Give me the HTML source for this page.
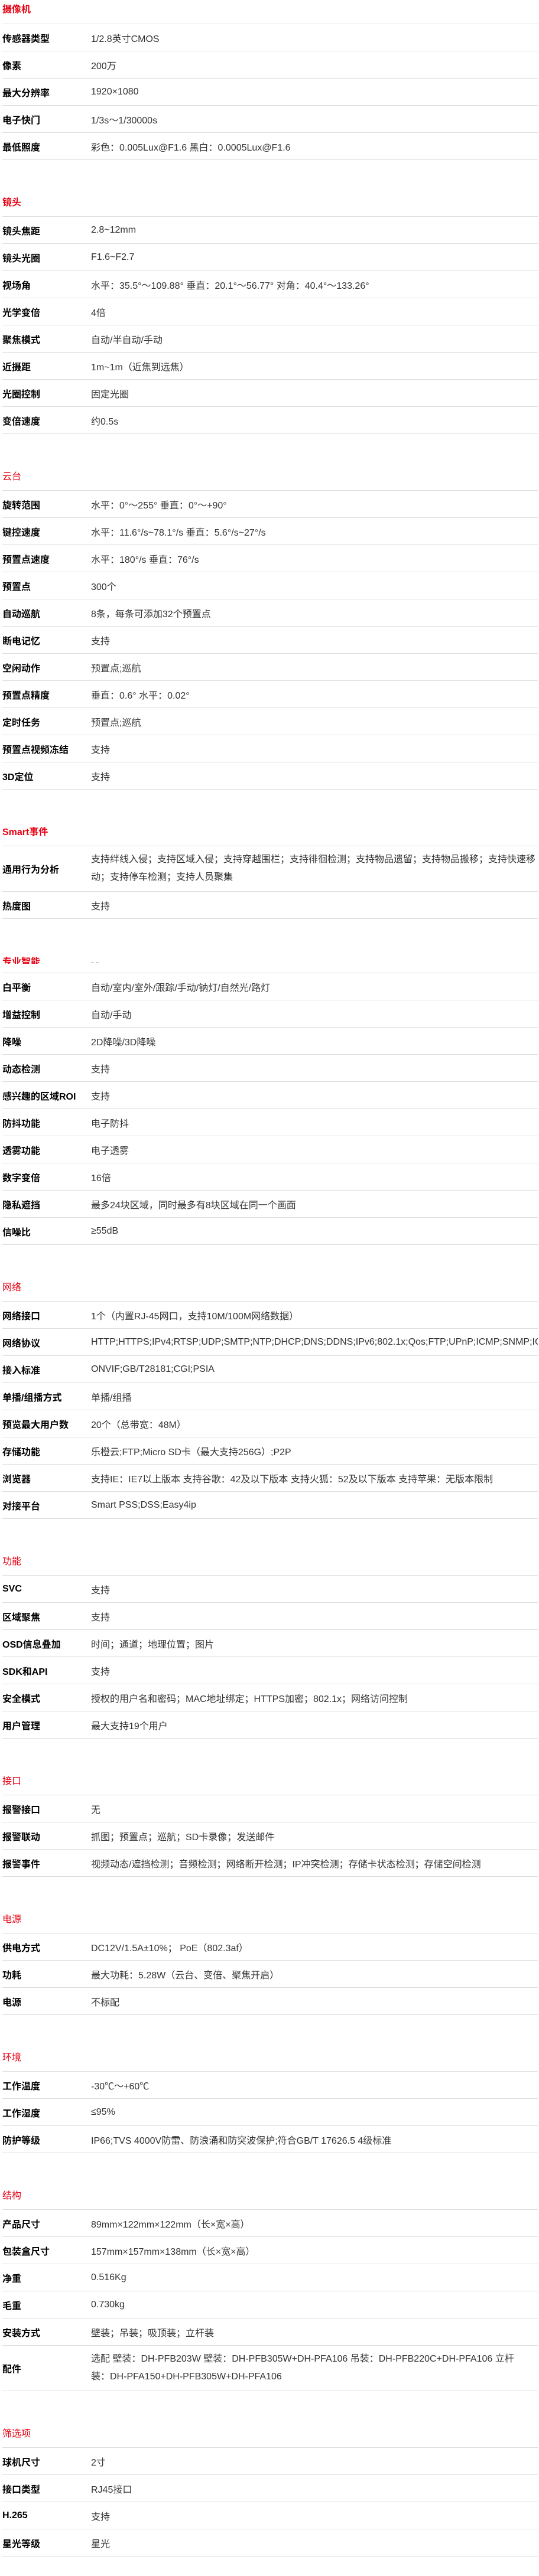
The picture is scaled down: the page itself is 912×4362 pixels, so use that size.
<!DOCTYPE html>
<html><head><meta charset="utf-8">
<style>
body{margin:0;width:912px;height:4362px;overflow:hidden;background:#fff;font-family:"Liberation Sans","Noto Sans CJK SC",sans-serif;font-size:16px}
.sec{margin:55px 2px 0 4px;overflow:hidden}
.h{height:40px;box-sizing:border-box;padding-top:8px;line-height:20px;color:#e60012}
.hb{font-weight:bold}
.r{border-top:1px solid #ddd;height:45px;display:flex;align-items:center;white-space:nowrap}
.r b{width:150px;flex:none;color:#000}
.r span{color:#333}
.r.t{height:76px}
.r.t span{white-space:normal;line-height:30px}
.end{border-top:1px solid #ddd}
</style></head><body>

<div class="sec" style="margin-top:0"><div class="h hb" style="padding-top:7px">摄像机</div>
<div class="r"><b>传感器类型</b><span>1/2.8英寸CMOS</span></div>
<div class="r"><b>像素</b><span>200万</span></div>
<div class="r"><b>最大分辨率</b><span>1920×1080</span></div>
<div class="r"><b>电子快门</b><span>1/3s～1/30000s</span></div>
<div class="r"><b>最低照度</b><span>彩色：0.005Lux@F1.6 黑白：0.0005Lux@F1.6</span></div>
<div class="end"></div></div>

<div class="sec"><div class="h hb">镜头</div>
<div class="r"><b>镜头焦距</b><span>2.8~12mm</span></div>
<div class="r"><b>镜头光圈</b><span>F1.6~F2.7</span></div>
<div class="r"><b>视场角</b><span>水平：35.5°～109.88° 垂直：20.1°～56.77° 对角：40.4°～133.26°</span></div>
<div class="r"><b>光学变倍</b><span>4倍</span></div>
<div class="r"><b>聚焦模式</b><span>自动/半自动/手动</span></div>
<div class="r"><b>近摄距</b><span>1m~1m（近焦到远焦）</span></div>
<div class="r"><b>光圈控制</b><span>固定光圈</span></div>
<div class="r"><b>变倍速度</b><span>约0.5s</span></div>
<div class="end"></div></div>

<div class="sec"><div class="h">云台</div>
<div class="r"><b>旋转范围</b><span>水平：0°～255° 垂直：0°～+90°</span></div>
<div class="r"><b>键控速度</b><span>水平：11.6°/s~78.1°/s 垂直：5.6°/s~27°/s</span></div>
<div class="r"><b>预置点速度</b><span>水平：180°/s 垂直：76°/s</span></div>
<div class="r"><b>预置点</b><span>300个</span></div>
<div class="r"><b>自动巡航</b><span>8条，每条可添加32个预置点</span></div>
<div class="r"><b>断电记忆</b><span>支持</span></div>
<div class="r"><b>空闲动作</b><span>预置点;巡航</span></div>
<div class="r"><b>预置点精度</b><span>垂直：0.6° 水平：0.02°</span></div>
<div class="r"><b>定时任务</b><span>预置点;巡航</span></div>
<div class="r"><b>预置点视频冻结</b><span>支持</span></div>
<div class="r"><b>3D定位</b><span>支持</span></div>
<div class="end"></div></div>

<div class="sec"><div class="h hb">Smart事件</div>
<div class="r t"><b>通用行为分析</b><span>支持绊线入侵；支持区域入侵；支持穿越围栏；支持徘徊检测；支持物品遗留；支持物品搬移；支持快速移<br>动；支持停车检测；支持人员聚集</span></div>
<div class="r"><b>热度图</b><span>支持</span></div>
<div class="end"></div></div>

<div class="sec" style="margin-top:51px"><div class="h hb" style="position:relative;padding-top:0"><div style="position:absolute;left:0;top:13px;height:12px;overflow:hidden;line-height:20px">专业智能</div><div style="position:absolute;left:150px;top:19px;font-size:9px;color:#666;line-height:8px;font-weight:normal">~ ~</div></div>
<div class="r"><b>白平衡</b><span>自动/室内/室外/跟踪/手动/钠灯/自然光/路灯</span></div>
<div class="r"><b>增益控制</b><span>自动/手动</span></div>
<div class="r"><b>降噪</b><span>2D降噪/3D降噪</span></div>
<div class="r"><b>动态检测</b><span>支持</span></div>
<div class="r"><b>感兴趣的区域ROI</b><span>支持</span></div>
<div class="r"><b>防抖功能</b><span>电子防抖</span></div>
<div class="r"><b>透雾功能</b><span>电子透雾</span></div>
<div class="r"><b>数字变倍</b><span>16倍</span></div>
<div class="r"><b>隐私遮挡</b><span>最多24块区域，同时最多有8块区域在同一个画面</span></div>
<div class="r"><b>信噪比</b><span>≥55dB</span></div>
<div class="end"></div></div>

<div class="sec"><div class="h">网络</div>
<div class="r"><b>网络接口</b><span>1个（内置RJ-45网口，支持10M/100M网络数据）</span></div>
<div class="r"><b>网络协议</b><span>HTTP;HTTPS;IPv4;RTSP;UDP;SMTP;NTP;DHCP;DNS;DDNS;IPv6;802.1x;Qos;FTP;UPnP;ICMP;SNMP;IGMP</span></div>
<div class="r"><b>接入标准</b><span>ONVIF;GB/T28181;CGI;PSIA</span></div>
<div class="r"><b>单播/组播方式</b><span>单播/组播</span></div>
<div class="r"><b>预览最大用户数</b><span>20个（总带宽：48M）</span></div>
<div class="r"><b>存储功能</b><span>乐橙云;FTP;Micro SD卡（最大支持256G）;P2P</span></div>
<div class="r"><b>浏览器</b><span>支持IE：IE7以上版本 支持谷歌：42及以下版本 支持火狐：52及以下版本 支持苹果：无版本限制</span></div>
<div class="r"><b>对接平台</b><span>Smart PSS;DSS;Easy4ip</span></div>
<div class="end"></div></div>

<div class="sec"><div class="h">功能</div>
<div class="r"><b>SVC</b><span>支持</span></div>
<div class="r"><b>区域聚焦</b><span>支持</span></div>
<div class="r"><b>OSD信息叠加</b><span>时间；通道；地理位置；图片</span></div>
<div class="r"><b>SDK和API</b><span>支持</span></div>
<div class="r"><b>安全模式</b><span>授权的用户名和密码；MAC地址绑定；HTTPS加密；802.1x；网络访问控制</span></div>
<div class="r"><b>用户管理</b><span>最大支持19个用户</span></div>
<div class="end"></div></div>

<div class="sec"><div class="h">接口</div>
<div class="r"><b>报警接口</b><span>无</span></div>
<div class="r"><b>报警联动</b><span>抓图；预置点；巡航；SD卡录像；发送邮件</span></div>
<div class="r"><b>报警事件</b><span>视频动态/遮挡检测；音频检测；网络断开检测；IP冲突检测；存储卡状态检测；存储空间检测</span></div>
<div class="end"></div></div>

<div class="sec"><div class="h">电源</div>
<div class="r"><b>供电方式</b><span>DC12V/1.5A±10%； PoE（802.3af）</span></div>
<div class="r"><b>功耗</b><span>最大功耗：5.28W（云台、变倍、聚焦开启）</span></div>
<div class="r"><b>电源</b><span>不标配</span></div>
<div class="end"></div></div>

<div class="sec"><div class="h">环境</div>
<div class="r"><b>工作温度</b><span>-30℃～+60℃</span></div>
<div class="r"><b>工作湿度</b><span>≤95%</span></div>
<div class="r"><b>防护等级</b><span>IP66;TVS 4000V防雷、防浪涌和防突波保护;符合GB/T 17626.5 4级标准</span></div>
<div class="end"></div></div>

<div class="sec"><div class="h">结构</div>
<div class="r"><b>产品尺寸</b><span>89mm×122mm×122mm（长×宽×高）</span></div>
<div class="r"><b>包装盒尺寸</b><span>157mm×157mm×138mm（长×宽×高）</span></div>
<div class="r"><b>净重</b><span>0.516Kg</span></div>
<div class="r"><b>毛重</b><span>0.730kg</span></div>
<div class="r"><b>安装方式</b><span>壁装；吊装；吸顶装；立杆装</span></div>
<div class="r t"><b>配件</b><span>选配 壁装：DH-PFB203W 壁装：DH-PFB305W+DH-PFA106 吊装：DH-PFB220C+DH-PFA106 立杆<br>装：DH-PFA150+DH-PFB305W+DH-PFA106</span></div>
<div class="end"></div></div>

<div class="sec"><div class="h">筛选项</div>
<div class="r"><b>球机尺寸</b><span>2寸</span></div>
<div class="r"><b>接口类型</b><span>RJ45接口</span></div>
<div class="r"><b>H.265</b><span>支持</span></div>
<div class="r"><b>星光等级</b><span>星光</span></div>
<div class="end"></div></div>

</body></html>
